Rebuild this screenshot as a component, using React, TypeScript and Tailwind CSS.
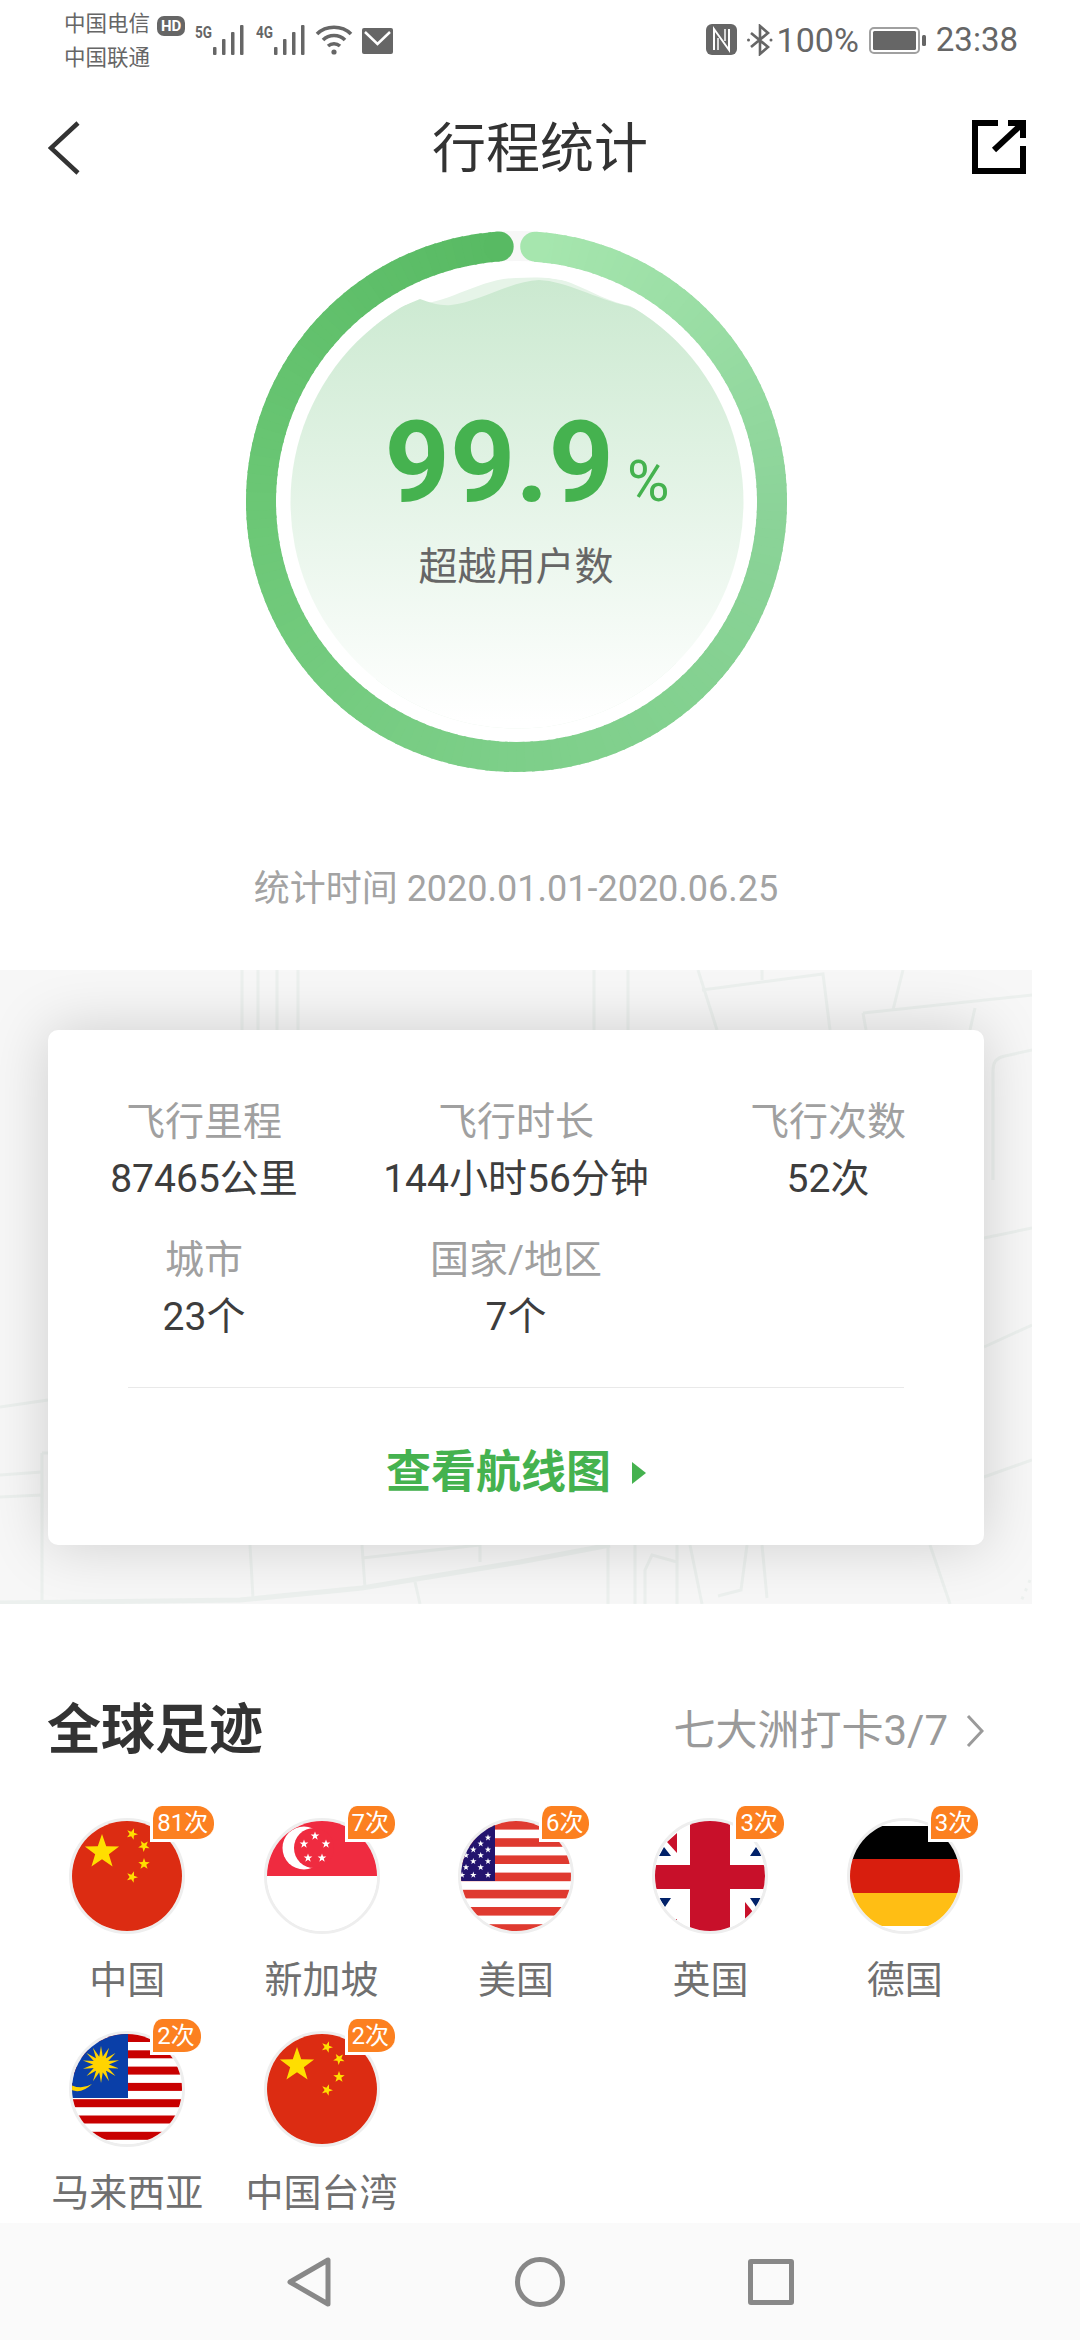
const FONT = 'font-["Roboto","Noto_Sans_CJK_SC",sans-serif]'

function starPoints(cx: number, cy: number, r: number, rot = 0) {
  const pts: string[] = []
  for (let i = 0; i < 10; i++) {
    const rad = i % 2 === 0 ? r : r * 0.4
    const a = ((-90 + rot + i * 36) * Math.PI) / 180
    pts.push(`${(cx + rad * Math.cos(a)).toFixed(2)},${(cy + rad * Math.sin(a)).toFixed(2)}`)
  }
  return pts.join(' ')
}

function ChinaFlag() {
  return (
    <>
      <rect width="110" height="110" fill="#dc2c12" />
      <polygon points={starPoints(30, 31, 18)} fill="#ffde00" />
      <polygon points={starPoints(60, 13, 6, 20)} fill="#ffde00" />
      <polygon points={starPoints(72, 25, 6, 40)} fill="#ffde00" />
      <polygon points={starPoints(72, 43, 6, 0)} fill="#ffde00" />
      <polygon points={starPoints(60, 56, 6, 20)} fill="#ffde00" />
    </>
  )
}

function SingaporeFlag() {
  return (
    <>
      <rect width="110" height="110" fill="#fff" />
      <rect width="110" height="55" fill="#ef2b40" />
      <circle cx="37" cy="27" r="21.5" fill="#fff" />
      <circle cx="47" cy="27" r="20" fill="#ef2b40" />
      {[
        [48, 15],
        [59, 23],
        [55, 37],
        [41, 37],
        [37, 23],
      ].map(([x, y]) => (
        <polygon key={`${x}-${y}`} points={starPoints(x, y, 4.6)} fill="#fff" />
      ))}
    </>
  )
}

function UsaFlag() {
  const stars = [
    [27, 16.7], [19.7, 22.7], [27, 28.7], [12.3, 28.7], [19.7, 34.3], [5, 34.3],
    [12.3, 40.3], [27, 40.3], [19.7, 46.3], [5, 46.3], [12.3, 54], [27, 54], [1, 54],
  ]
  return (
    <>
      <rect width="110" height="110" fill="#fff" />
      {[0, 1, 2, 3, 4, 5, 6].map((i) => (
        <rect key={i} y={i * 17.2} width="110" height="8.6" fill="#df3a30" />
      ))}
      <rect width="34" height="60" fill="#23146e" />
      {stars.map(([x, y]) => (
        <polygon key={`${x}-${y}`} points={starPoints(x, y, 3.4)} fill="#fff" />
      ))}
    </>
  )
}

function UkFlag() {
  return (
    <>
      <rect width="110" height="110" fill="#fff" />
      <polygon points="9,26 4,35 16,35" fill="#012169" />
      <polygon points="101,26 95,35 107,35" fill="#012169" />
      <polygon points="4,77 16,77 10,86" fill="#012169" />
      <polygon points="95,77 106,77 101,86" fill="#012169" />
      <polygon points="22,12 22,32 12,21" fill="#c8102a" />
      <polygon points="90,81 98,91 90,99" fill="#c8102a" />
      <polygon points="21,98 22,98 22,102 21,102" fill="#c8102a" />
      <rect x="35" width="40" height="110" fill="#c8102a" />
      <rect y="44" width="110" height="24" fill="#c8102a" />
    </>
  )
}

function GermanyFlag() {
  return (
    <>
      <rect width="110" height="110" fill="#fff" />
      <rect y="5" width="110" height="33.5" fill="#000" />
      <rect y="38" width="110" height="34" fill="#d81e0e" />
      <rect y="72" width="110" height="33" fill="#ffbe14" />
    </>
  )
}

function MalaysiaFlag() {
  const rays = Array.from({ length: 14 }, (_, i) => i)
  return (
    <>
      <rect width="110" height="110" fill="#fff" />
      {[0, 1, 2, 3, 4, 5, 6].map((i) => (
        <rect key={i} y={i * 16.3} width="110" height="8" fill="#c80000" />
      ))}
      <rect width="56" height="64" fill="#0a3fa8" />
      {rays.map((i) => (
        <polygon key={i} points="29,12 31,24 27,24" fill="#ffd400" transform={`rotate(${i * 25.7} 29 30.5)`} />
      ))}
      <circle cx="29" cy="30.5" r="8" fill="#ffd400" />
      <path d="M-1 51 Q10 56 20 50 Q10 60 -1 56 Z" fill="#ffd400" />
    </>
  )
}

function Flag({ name, count, children }: { name: string; count: string; children: React.ReactNode }) {
  return (
    <div className="flex flex-col items-center h-[213px]">
      <div className="relative w-[116px] h-[116px]">
        <div className="w-[116px] h-[116px] rounded-full border-[3px] border-[#eeeeee] overflow-hidden bg-white">
          <svg width="110" height="110" viewBox="0 0 110 110">
            {children}
          </svg>
        </div>
        <span className="absolute left-[81px] -top-[12px] h-[36px] pl-[4px] pr-[6px] flex items-center text-[24px] leading-none text-white bg-[#fc8020] border-l-[3px] border-b-[3px] border-white rounded-tl-[12px] rounded-tr-[17px] rounded-br-[17px] whitespace-nowrap">
          {count}
        </span>
      </div>
      <span className="mt-[24px] text-[38px] leading-[44px] text-[#707070] whitespace-nowrap">{name}</span>
    </div>
  )
}

function Ring() {
  const c = 270.5
  const r = 255.5
  const stops = [
    [166, 230, 174],
    [139, 211, 152],
    [125, 207, 137],
    [107, 199, 117],
    [88, 186, 99],
  ]
  const colorAt = (t: number) => {
    const p = Math.min(t * 4, 3.999)
    const i = Math.floor(p)
    const f = p - i
    const mix = stops[i].map((v, k) => Math.round(v + (stops[i + 1][k] - v) * f))
    return `rgb(${mix[0]},${mix[1]},${mix[2]})`
  }
  const pt = (deg: number) => {
    const a = ((deg - 90) * Math.PI) / 180
    return [c + r * Math.cos(a), c + r * Math.sin(a)]
  }
  const start = 4.2
  const end = 356
  const n = 176
  const segs = Array.from({ length: n }, (_, i) => {
    const a0 = start + ((end - start) * i) / n
    const a1 = start + ((end - start) * (i + 1.3)) / n
    const [x0, y0] = pt(a0)
    const [x1, y1] = pt(Math.min(a1, end))
    return { d: `M${x0} ${y0} A${r} ${r} 0 0 1 ${x1} ${y1}`, color: colorAt(i / n) }
  })
  const [sx, sy] = pt(start)
  const [ex, ey] = pt(end)
  return (
    <svg width="541" height="541" viewBox="0 0 541 541" className="absolute inset-0">
      <defs>
        <clipPath id="disc">
          <circle cx="271" cy="271" r="226.5" />
        </clipPath>
        <linearGradient id="discFill" gradientUnits="userSpaceOnUse" x1="0" y1="50" x2="0" y2="490">
          <stop offset="0" stopColor="#cbe9d0" />
          <stop offset="1" stopColor="#ffffff" />
        </linearGradient>
      </defs>
      <circle cx={c} cy={c} r={r} fill="none" stroke="#f7f7f7" strokeWidth="30" />
      {segs.map((s, i) => (
        <path key={i} d={s.d} fill="none" stroke={s.color} strokeWidth="30" />
      ))}
      <circle cx={sx} cy={sy} r="15" fill={colorAt(0)} />
      <circle cx={ex} cy={ey} r="15" fill={colorAt(1)} />
      <g clipPath="url(#disc)">
        <path
          d="M130 82 L159 74 C200 76 230 48 270 47 C290 46 310 46 325 52 C345 60 365 72 385 75 L430 100 V541 H130 Z"
          fill="#e6f4e8"
        />
        <path
          d="M40 110 L150 78 L174 68 C185 72 195 75 205 74 C230 72 265 50 293 49 C320 50 350 68 382 75 L500 120 V541 H40 Z"
          fill="url(#discFill)"
        />
      </g>
    </svg>
  )
}

function MapLines() {
  return (
    <svg width="1032" height="634" viewBox="0 0 1032 634" className="absolute inset-0" fill="none" stroke="#ecf0ee" strokeWidth="3">
      <path d="M242 0V60M258 0V60M277 0V60M298 0V60M594 0V60M628 0V60M698 0L717 60M702 20L823 4L830 60M762 0V10M903 0L893 40M863 43L1032 25M863 43L866 60M975 38L970 60" />
      <path d="M0 633L240 630L362 618L520 592L610 575" strokeWidth="5" />
      <path d="M42 483V631M250 575L253 628M362 575L365 618M362 588L480 575V592M415 612L420 634M608 575V634M635 575V634M645 634V600L652 585L677 592M677 575V634M690 575L702 634M747 575L741 620L718 626M762 575L767 628M930 575L950 634" />
      <path d="M0 437L48 430M0 505L42 502M0 527L42 525M42 483H48" />
      <path d="M984 268L1032 258M984 377L1032 355M984 507L1032 490M993 210V100Q993 88 1005 86L1032 80" />
      <path d="M1030 610L1020 634" strokeDasharray="3 6" />
    </svg>
  )
}

function Signal({ label, className }: { label: string; className: string }) {
  return (
    <svg width="50" height="38" viewBox="0 -6 50 38" className={className} fill="#666666">
      <text x="0" y="14" fontSize="16" fontWeight="700" textLength="17" lengthAdjust="spacingAndGlyphs">{label}</text>
      <rect x="18" y="23" width="3.5" height="8" rx="1" />
      <rect x="27" y="15" width="3.5" height="16" rx="1" />
      <rect x="36" y="8" width="3.5" height="23" rx="1" />
      <rect x="45" y="1" width="3.5" height="30" rx="1" />
    </svg>
  )
}

function StatusBar() {
  return (
    <div className="h-[84px] pt-[7px] pl-[64px] pr-[62px] flex justify-between text-[#666666] shrink-0">
      <div className="flex">
        <div className="flex flex-col text-[21.5px] leading-[34px] pr-[1px] whitespace-nowrap">
          <span>中国电信</span>
          <span>中国联通</span>
        </div>
        <span className="self-start mt-[9px] ml-[6px] px-[4px] h-[20px] rounded-[7px] bg-[#666666] text-white text-[15px] leading-[20px] font-bold whitespace-nowrap">HD</span>
        <Signal label="5G" className="mt-[11px] ml-[10px]" />
        <Signal label="4G" className="mt-[11px] ml-[11px]" />
        <svg width="38" height="32" viewBox="0 0 38 32" className="mt-[17px] ml-[9px]" fill="none" stroke="#666666" strokeWidth="3.6">
          <path d="M2 10C11 1 27 1 36 10" />
          <path d="M8 16C14 10 24 10 30 16" />
          <path d="M13 22C16.5 19 21.5 19 25 22" />
          <circle cx="19" cy="28" r="2.6" fill="#666666" stroke="none" />
        </svg>
        <svg width="31" height="26" viewBox="0 0 31 26" className="mt-[21px] ml-[9px]">
          <rect width="31" height="26" rx="2" fill="#666666" />
          <path d="M3 4L15.5 16L28 4" fill="none" stroke="#fff" strokeWidth="2.5" />
        </svg>
      </div>
      <div className="flex items-start">
        <svg width="31" height="31" viewBox="0 0 31 31" className="mt-[17px]">
          <rect width="31" height="31" rx="6" fill="#666666" />
          <path d="M8 26V5L23 26V5" fill="none" stroke="#fff" strokeWidth="2" />
          <path d="M12 26V14M19 17V5" fill="none" stroke="#fff" strokeWidth="1.5" />
        </svg>
        <svg width="26" height="32" viewBox="0 0 26 32" className="mt-[17px] ml-[10px]" fill="none" stroke="#666666" strokeWidth="2.6">
          <path d="M4 9L21 23L13 30V2L21 9L4 23" />
          <circle cx="1.5" cy="16" r="1.5" fill="#666666" stroke="none" />
          <circle cx="24" cy="16" r="1.5" fill="#666666" stroke="none" />
        </svg>
        <span className="text-[34px] leading-[40px] mt-[13px] ml-[4px]">100%</span>
        <svg width="57" height="27" viewBox="0 0 57 27" className="mt-[20px] ml-[10px]">
          <rect x="1" y="1" width="49" height="25" rx="4" fill="none" stroke="#a0a0a0" strokeWidth="2" />
          <rect x="4" y="4" width="43" height="19" rx="1.5" fill="#666666" />
          <rect x="53" y="8" width="4" height="11" rx="1.5" fill="#666666" />
        </svg>
        <span className="text-[33px] leading-[40px] mt-[13px] ml-[10px]">23:38</span>
      </div>
    </div>
  )
}

function Stat({ label, value }: { label: string; value: string }) {
  return (
    <div className="flex flex-col items-center">
      <span className="text-[39px] leading-[57px] text-[#a0a0a0] whitespace-nowrap">{label}</span>
      <span className="text-[39px] leading-[57px] text-[#3d3d3d] whitespace-nowrap">{value}</span>
    </div>
  )
}

export default function App() {
  return (
    <div className={`${FONT} relative w-[1080px] h-[2340px] bg-white flex flex-col overflow-hidden`}>
      <StatusBar />

      {/* 标题栏 */}
      <div className="h-[132px] pl-[48px] pr-[54px] flex items-center shrink-0">
        <div className="w-[60px] mb-[4px]">
          <svg width="32" height="54" viewBox="0 0 32 54" fill="none" stroke="#333333" strokeWidth="4.5">
            <path d="M30 2L3 27L30 52" />
          </svg>
        </div>
        <h1 className="flex-1 text-center text-[54px] leading-none text-[#333333] font-normal">行程统计</h1>
        <svg width="54" height="54" viewBox="0 0 54 54" className="mb-[6px]" fill="none" stroke="#000000" strokeWidth="6">
          <path d="M26 3H3V51H51V26" />
          <path d="M22 30L50 4" />
          <path d="M36 3H51V18" />
        </svg>
      </div>

      <div className="flex-1 w-[1032px] min-h-0">
        {/* 圆环 */}
        <div className="relative mt-[15px] mx-auto w-[541px] h-[541px]">
          <Ring />
          <div className="absolute inset-0 flex flex-col items-center">
            <div className="mt-[163px] ml-[22px] flex items-baseline text-[#45b24f] h-[136px]">
              <span className="text-[114px] leading-[136px] font-bold">99.9</span>
              <span className="ml-[13px] text-[58px] leading-none">%</span>
            </div>
            <span className="mt-[14px] text-[39px] leading-[46px] text-[#666666]">超越用户数</span>
          </div>
        </div>

        <div className="mt-[93px] h-[48px] text-center text-[36px] leading-[48px] text-[#a3a3a3] whitespace-nowrap">
          统计时间 2020.01.01-2020.06.25
        </div>

        {/* 地图卡片 */}
        <section className="relative mt-[57px] h-[634px] bg-[#f7f7f7] overflow-hidden px-[48px] pt-[60px]">
          <MapLines />
          <div className="relative h-[515px] rounded-[10px] bg-white shadow-[0_0_60px_rgba(0,0,0,0.17)] pt-[64px] px-[80px]">
            <div className="-mx-[80px] grid grid-cols-3 gap-y-[24px]">
              <Stat label="飞行里程" value="87465公里" />
              <Stat label="飞行时长" value="144小时56分钟" />
              <Stat label="飞行次数" value="52次" />
              <Stat label="城市" value="23个" />
              <Stat label="国家/地区" value="7个" />
            </div>
            <div className="mt-[41px] h-px bg-[#e9e9e9]" />
            <div className="mt-[57px] flex justify-center items-center text-[#45b24f]">
              <span className="text-[45px] leading-[56px] font-bold">查看航线图</span>
              <span className="ml-[21px] w-0 h-0 border-y-[11px] border-y-transparent border-l-[14px] border-l-[#45b24f]" />
            </div>
          </div>
        </section>

        {/* 全球足迹 */}
        <div className="mt-[97px] pl-[47px] pr-[48px] flex items-center justify-between h-[60px]">
          <h2 className="text-[54px] leading-[60px] font-bold text-[#333333]">全球足迹</h2>
          <div className="flex items-center text-[#9a9a9a]">
            <span className="text-[42px] leading-[60px]">七大洲打卡3/7</span>
            <svg width="18" height="34" viewBox="0 0 18 34" className="ml-[18px]" fill="none" stroke="#9a9a9a" strokeWidth="3">
              <path d="M2 2L16 17L2 32" />
            </svg>
          </div>
        </div>

        <div className="mt-[57px] pl-[30px] w-[1002px] grid grid-cols-5">
          <Flag name="中国" count="81次"><ChinaFlag /></Flag>
          <Flag name="新加坡" count="7次"><SingaporeFlag /></Flag>
          <Flag name="美国" count="6次"><UsaFlag /></Flag>
          <Flag name="英国" count="3次"><UkFlag /></Flag>
          <Flag name="德国" count="3次"><GermanyFlag /></Flag>
          <Flag name="马来西亚" count="2次"><MalaysiaFlag /></Flag>
          <Flag name="中国台湾" count="2次"><ChinaFlag /></Flag>
        </div>
      </div>

      {/* 系统导航栏 */}
      <div className="h-[117px] bg-[#fafafa] flex justify-center items-center shrink-0">
        <div className="w-[231px] flex justify-center">
          <svg width="44" height="50" viewBox="0 0 44 50" fill="none" stroke="#888888" strokeWidth="5" strokeLinejoin="round">
            <path d="M41 3V47L3 25Z" />
          </svg>
        </div>
        <div className="w-[231px] flex justify-center">
          <div className="w-[50px] h-[50px] rounded-full border-[5px] border-[#888888]" />
        </div>
        <div className="w-[231px] flex justify-center">
          <div className="w-[46px] h-[46px] rounded-[3px] border-[5px] border-[#888888]" />
        </div>
      </div>
    </div>
  )
}
